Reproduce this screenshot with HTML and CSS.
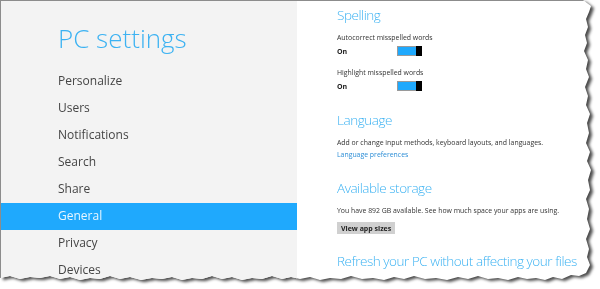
FILE: index.html
```html
<!DOCTYPE html>
<html lang="en">
<head>
  <meta charset="UTF-8">
  <meta name="viewport" content="width=device-width, initial-scale=1.0">
  <title>PC settings</title>
  <link rel="stylesheet" href="styles.css">
</head>
<body>
  <div class="sheet">
    <div class="page">
      <nav class="sidebar">
        <h1 class="title">PC settings</h1>
        <ul class="menu">
          <li>Personalize</li>
          <li>Users</li>
          <li>Notifications</li>
          <li>Search</li>
          <li>Share</li>
          <li class="active">General</li>
          <li>Privacy</li>
          <li>Devices</li>
        </ul>
      </nav>

      <main class="content">
        <section class="group">
          <h2>Spelling</h2>
          <div class="setting">
            <p class="label">Autocorrect misspelled words</p>
            <div class="toggle-row">
              <span class="state">On</span>
              <span class="toggle"><span class="thumb"></span></span>
            </div>
          </div>
          <div class="setting">
            <p class="label">Highlight misspelled words</p>
            <div class="toggle-row">
              <span class="state">On</span>
              <span class="toggle"><span class="thumb"></span></span>
            </div>
          </div>
        </section>

        <section class="group">
          <h2>Language</h2>
          <p class="label">Add or change input methods, keyboard layouts, and languages.</p>
          <a class="link" href="#">Language preferences</a>
        </section>

        <section class="group">
          <h2>Available storage</h2>
          <p class="label">You have 892 GB available. See how much space your apps are using.</p>
          <button class="button">View app sizes</button>
        </section>

        <section class="group">
          <h2>Refresh your PC without affecting your files</h2>
        </section>
      </main>
    </div>
  </div>
</body>
</html>
```

FILE: styles.css
```css
body {
  margin: 0;
  background-color: white;
  font-family: 'Open Sans', 'Noto Sans', Arial, sans-serif;
  overflow: hidden;
}

/* torn paper look: the shadow follows the clipped edge */
.sheet {
  width: 600px;
  height: 289px;
  filter: drop-shadow(3px 2px 1.5px rgba(0, 0, 0, 0.7));
}

.page {
  display: flex;
  height: 289px;
  box-sizing: border-box;
  border-top: 1px solid #8c8c8c;
  border-left: 1px solid #8c8c8c;
  background-color: white;
  overflow: hidden;
  clip-path: polygon(
    0 0, 583px 0, 591px 6px, 589px 12px, 586px 19px, 588px 27px, 585px 35px,
    587px 43px, 584px 51px, 588px 60px, 586px 69px, 589px 77px, 585px 87px,
    588px 96px, 586px 105px, 590px 114px, 587px 123px, 589px 133px, 586px 143px,
    590px 152px, 587px 161px, 591px 170px, 588px 180px, 590px 190px, 586px 199px,
    589px 209px, 587px 219px, 590px 229px, 586px 239px, 589px 249px, 587px 257px,
    590px 265px, 586px 273px, 579px 276px, 571px 275px, 562px 279px, 553px 277px,
    545px 280px, 536px 278px, 527px 279px, 518px 277px, 508px 280px, 498px 278px,
    488px 279px, 478px 276px, 468px 279px, 458px 277px, 447px 280px, 436px 278px,
    425px 279px, 414px 276px, 404px 279px, 394px 277px, 384px 280px, 373px 278px,
    362px 279px, 351px 276px, 341px 279px, 330px 278px, 320px 280px, 310px 277px,
    300px 279px, 291px 277px, 282px 279px, 272px 276px, 262px 279px, 252px 278px,
    242px 280px, 232px 277px, 222px 279px, 212px 276px, 202px 279px, 192px 278px,
    182px 280px, 172px 277px, 162px 279px, 152px 278px, 141px 280px, 130px 277px,
    120px 279px, 110px 276px, 100px 279px, 90px 278px, 80px 280px, 70px 277px,
    60px 279px, 50px 276px, 40px 278px, 30px 277px, 20px 279px, 10px 276px, 0 278px
  );
}

.sidebar {
  width: 296px;
  flex-shrink: 0;
  background-color: #f3f3f3;
  padding-top: 21px;
}

.title {
  margin: 0 0 14px 57px;
  font-size: 26px;
  font-weight: 300;
  line-height: 32px;
  color: #3cb2f2;
}

.menu {
  list-style: none;
  margin: 0;
  padding: 0;
}

.menu li {
  height: 27px;
  line-height: 26px;
  padding-left: 57px;
  font-size: 12px;
  color: #454545;
}

.menu li.active {
  background-color: #1fa9fd;
  color: #e8f6ff;
}

.content {
  flex: 1;
  padding: 4px 0 0 40px;
  color: #333;
}

.group {
  margin-bottom: 17px;
}

.group h2 {
  margin: 0 0 7px;
  font-size: 13.5px;
  font-weight: 300;
  letter-spacing: -0.45px;
  line-height: 20px;
  color: #3cb2f2;
}

.setting + .setting {
  margin-top: 9px;
}

.label {
  margin: 0;
  font-size: 6.9px;
  line-height: 12px;
  color: #333;
}

.toggle-row {
  display: flex;
  align-items: center;
  height: 14px;
}

.state {
  width: 60px;
  font-size: 7px;
  font-weight: bold;
  color: #222;
}

.toggle {
  display: flex;
  justify-content: flex-end;
  width: 25px;
  height: 10px;
  box-sizing: border-box;
  border: 1px solid #9a9a9a;
  background-color: #1fa9fd;
}

.thumb {
  width: 6px;
  margin: -1px -1px -1px 0;
  background-color: black;
}

.link {
  display: block;
  font-size: 6.9px;
  line-height: 12px;
  color: #2b8dd6;
  text-decoration: none;
}

.button {
  display: block;
  margin-top: 5px;
  padding: 0 4px;
  height: 12px;
  border: none;
  background-color: #d0d0d0;
  font-family: inherit;
  font-size: 7px;
  font-weight: bold;
  color: #222;
}
```
